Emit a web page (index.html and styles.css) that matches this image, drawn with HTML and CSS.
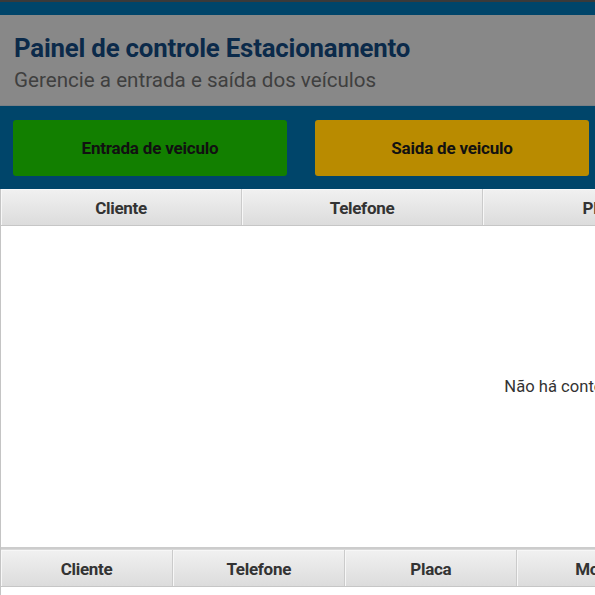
FILE: index.html
```html
<!DOCTYPE html>
<html lang="pt">
<head>
<meta charset="utf-8">
<title>Painel de controle Estacionamento</title>
<link rel="stylesheet" href="styles.css">
</head>
<body>
<div class="page">
  <div class="topline"></div>
  <div class="app">
    <header class="header">
      <h1 class="title">Painel de controle Estacionamento</h1>
      <p class="subtitle">Gerencie a entrada e saída dos veículos</p>
    </header>
    <div class="actions">
      <button class="btn btn-in">Entrada de veiculo</button>
      <button class="btn btn-out">Saida de veiculo</button>
    </div>
  </div>
  <section class="table table-main">
    <div class="thead cols5">
      <div class="th">Cliente</div>
      <div class="th">Telefone</div>
      <div class="th">Placa</div>
      <div class="th">Modelo</div>
      <div class="th">Entrada</div>
    </div>
    <div class="tbody">
      <span class="empty">Não há conteúdo na tabela</span>
    </div>
  </section>
  <section class="table table-second">
    <div class="thead cols7">
      <div class="th">Cliente</div>
      <div class="th">Telefone</div>
      <div class="th">Placa</div>
      <div class="th">Modelo</div>
      <div class="th">Entrada</div>
      <div class="th">Saída</div>
      <div class="th">Valor</div>
    </div>
    <div class="tbody small"></div>
  </section>
</div>
</body>
</html>
```

FILE: styles.css
```css
html, body {
  margin: 0;
  padding: 0;
  background: #ffffff;
  overflow: hidden;
}
body {
  font-family: Roboto, "Liberation Sans", sans-serif;
}
.page {
  width: 1206px;
}
.topline {
  height: 2px;
  background: #3a3a3a;
}
.app {
  background: #00456a;
  padding-top: 13px;
}
.header {
  background: #888888;
  height: 91px;
  border-bottom: 1px solid #7a7f84;
  padding: 0 14px;
  box-sizing: border-box;
}
.title {
  margin: 0;
  padding-top: 18px;
  font-size: 25.8px;
  line-height: 30px;
  font-weight: 700;
  color: #0b2a4a;
  letter-spacing: -0.2px;
}
.subtitle {
  margin: 5px 0 0;
  font-size: 20.6px;
  line-height: 24px;
  color: #3f3f3f;
}
.actions {
  display: flex;
  gap: 28px;
  padding: 14px 13px 13px;
}
.btn {
  width: 274px;
  height: 56px;
  border: none;
  border-radius: 3px;
  font-family: Roboto, "Liberation Sans", sans-serif;
  font-size: 17px;
  font-weight: 700;
  color: #111111;
  letter-spacing: -0.2px;
  padding: 0;
}
.btn-in {
  background: #127f00;
}
.btn-out {
  background: #b98b00;
}
.table {
  border-left: 1px solid #c4c4c4;
}
.thead {
  display: grid;
  height: 36px;
  border-bottom: 1px solid #c6c6c6;
  background: linear-gradient(#f1f1f1, #dcdcdc);
}
.cols5 {
  grid-template-columns: repeat(5, 1fr);
}
.cols7 {
  grid-template-columns: repeat(7, 1fr);
}
.th {
  display: flex;
  align-items: center;
  justify-content: center;
  padding-top: 2px;
  box-sizing: border-box;
  border-right: 1px solid #cbcbcb;
  box-shadow: inset 1px 1px 0 #f7f7f7;
  font-size: 17px;
  font-weight: 700;
  color: #333333;
  letter-spacing: -0.3px;
}
.table-main .tbody {
  height: 321px;
  display: flex;
  align-items: center;
  justify-content: center;
  border-bottom: 2px solid #cccccc;
}
.empty {
  font-size: 16.6px;
  color: #333333;
}
.table-second .thead {
  border-top: 1px solid #d8d8d8;
}
.tbody.small {
  height: 40px;
}
```
